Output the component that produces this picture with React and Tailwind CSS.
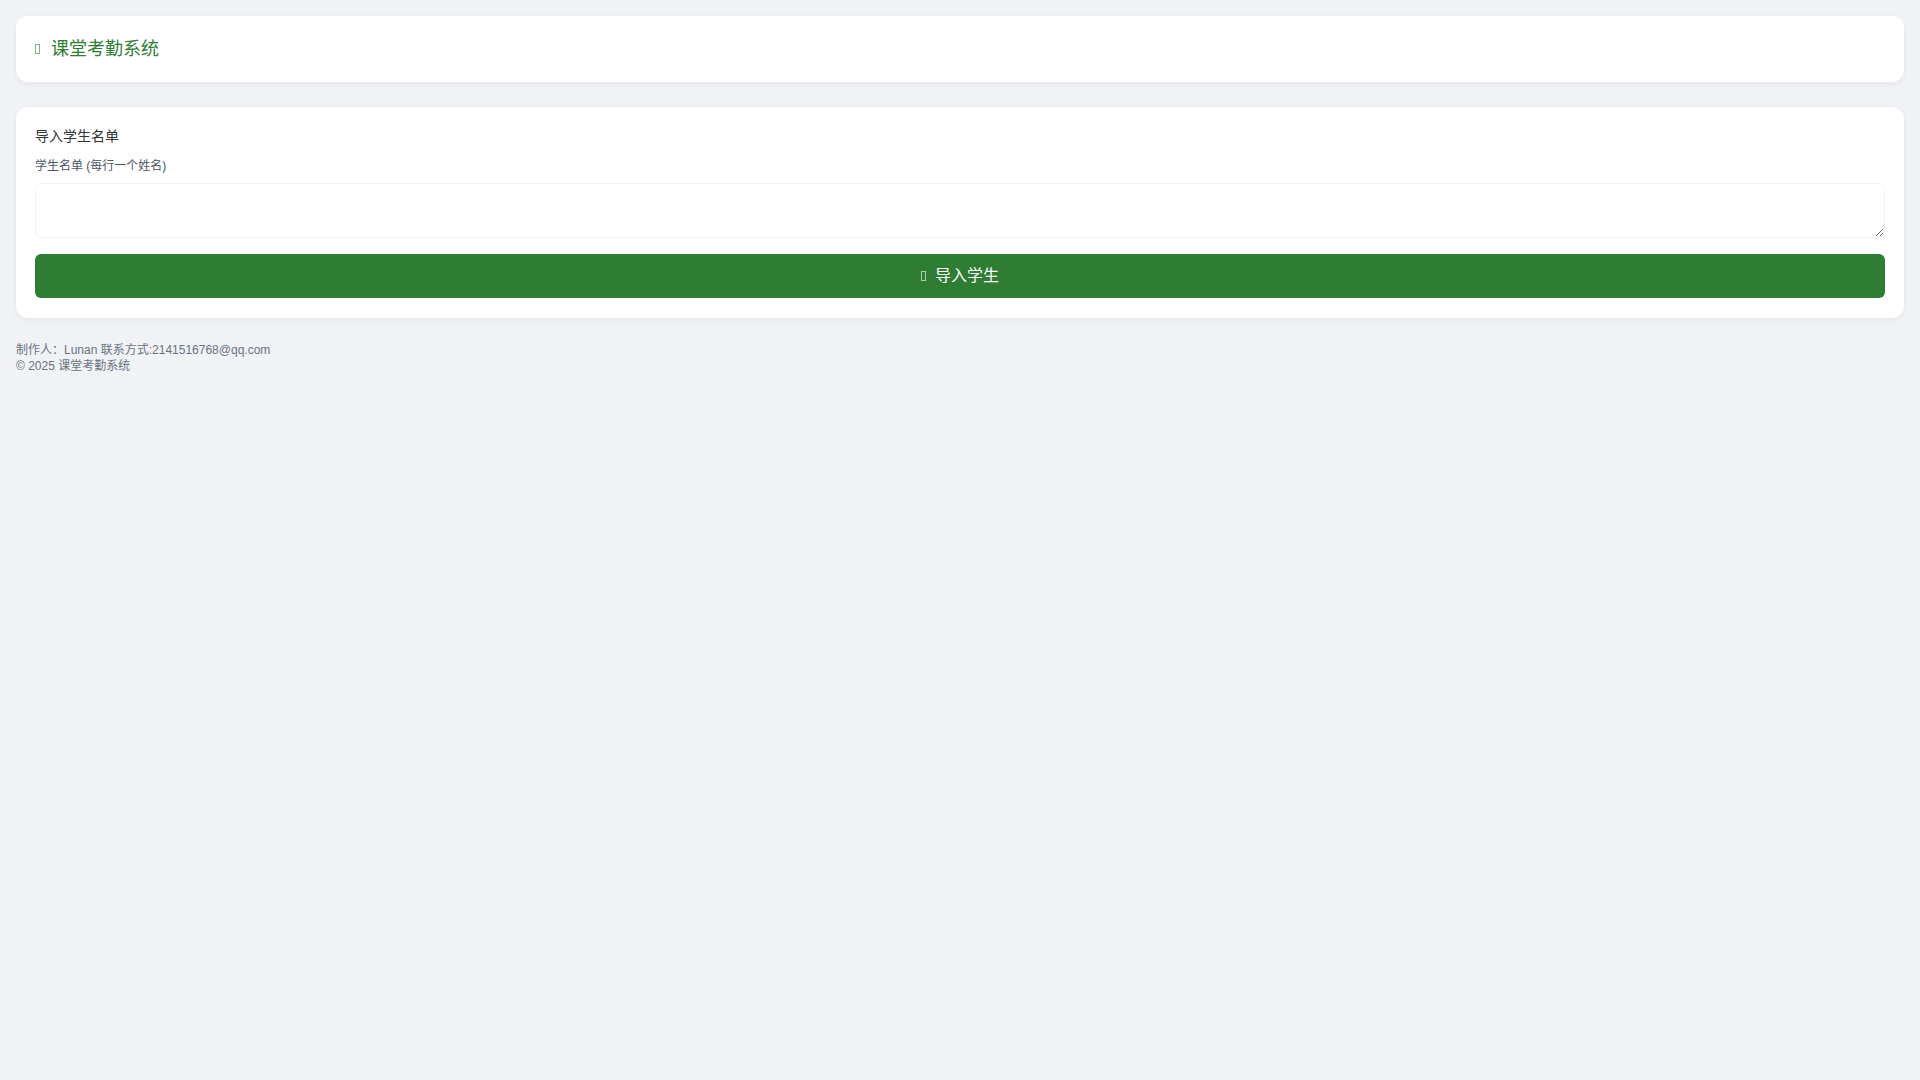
import React from "react";

const Tofu = ({ className }) => (
  <span className={"inline-block w-[5px] h-[10px] border border-current " + className} />
);

const App = () => {
  return (
    <div
      className="min-h-screen bg-[#f0f2f5] p-4 text-[#333]"
      style={{ fontFamily: '"Liberation Sans", "Noto Sans CJK SC", sans-serif' }}
    >
      <header className="bg-white rounded-xl shadow-[0_2px_6px_rgba(0,0,0,0.06)] px-[19px] py-[19px] mb-[25px]">
        <h1 className="text-[18px] leading-[28px] font-normal text-[#2e7d32] flex items-center">
          <Tofu className="mr-[11px] opacity-60" />
          课堂考勤系统
        </h1>
      </header>

      <section className="bg-white rounded-xl shadow-[0_2px_6px_rgba(0,0,0,0.06)] px-[19px] pt-[19px] pb-[20px]">
        <h2 className="text-[14px] leading-[20px] font-normal text-[#333] mb-[12px]">导入学生名单</h2>
        <label className="block text-[12px] leading-[17px] text-[#4b5563] mb-[8px]">学生名单 (每行一个姓名)</label>
        <textarea
          rows={2}
          className="block w-full h-[55px] border border-[#f3f3f3] rounded-md px-2 py-1 text-sm outline-none"
        />
        <button className="mt-[16px] w-full h-[44px] rounded-md bg-[#2e7d32] text-white text-[16px] flex items-center justify-center">
          <Tofu className="mr-[9px] opacity-60" />
          导入学生
        </button>
      </section>

      <footer className="mt-[24px] text-[12px] leading-[16px] text-[#6b7280]">
        <div>制作人：Lunan 联系方式:2141516768@qq.com</div>
        <div>© 2025 课堂考勤系统</div>
      </footer>
    </div>
  );
};

export default App;
